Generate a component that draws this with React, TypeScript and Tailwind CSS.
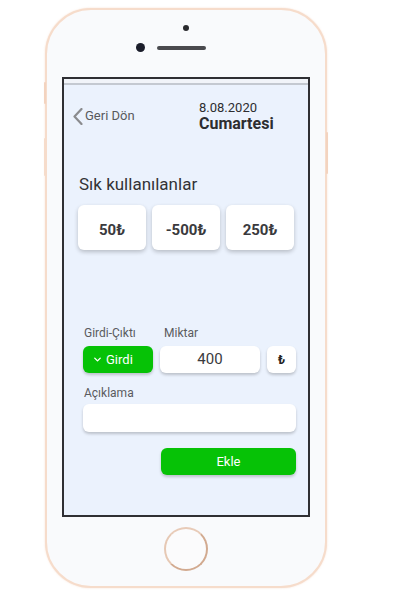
import { ChevronDown } from "lucide-react";

const quick = ["50₺", "-500₺", "250₺"];

const App = () => {
  return (
    <div className="w-[414px] h-[602px] bg-white overflow-hidden font-['Roboto',sans-serif]">
      <div className="relative ml-[45px] mt-[8px] w-[282px] h-[580px] rounded-[46px] border-2 border-[#f6dccb] bg-[#f9fafc] flex flex-col items-center shadow-[0_0_2px_rgba(240,200,175,0.6)]">
        {/* side buttons */}
        <div className="absolute -left-[3px] top-[72px] w-[2px] h-[22px] rounded-full bg-[#f3d3bf]" />
        <div className="absolute -left-[3px] top-[128px] w-[2px] h-[38px] rounded-full bg-[#f6dccb]" />
        <div className="absolute -right-[3px] top-[122px] w-[2px] h-[42px] rounded-full bg-[#f3d3bf]" />

        {/* top: sensor, camera, speaker */}
        <div className="h-[67px] w-full flex flex-col items-center">
          <div className="mt-[15px] w-[6px] h-[6px] rounded-full bg-[#2a2a2e]" />
          <div className="mt-[12px] flex items-center gap-[12px] -ml-[30px]">
            <div className="w-[9px] h-[9px] rounded-full bg-[#1b1d2b]" />
            <div className="w-[49px] h-[4px] rounded-full bg-[#4a4a4e]" />
          </div>
        </div>

        {/* screen */}
        <div className="w-[248px] h-[440px] border-2 border-[#2f2f33] bg-[#ebf2fd] flex flex-col">
          <div className="h-[4px] bg-[#f1f4f9]" />
          <div className="h-[2px] bg-[#c4c9d1]" />

          <div className="mt-[15px] flex items-center pl-[9px]">
            <div className="w-[126px] flex items-center gap-[2px] text-[#58595c] text-[13px]">
              <svg width="10" height="17" viewBox="0 0 10 17" fill="none">
                <polyline points="8.5,1 1.5,8.5 8.5,16" stroke="#8a8b8e" strokeWidth="2.2" strokeLinecap="round" strokeLinejoin="round" />
              </svg>
              <span>Geri Dön</span>
            </div>
            <div className="flex flex-col text-[#2d2d30]">
              <span className="text-[13px] leading-[15px]">8.08.2020</span>
              <span className="text-[16px] leading-[17px] font-bold">Cumartesi</span>
            </div>
          </div>

          <div className="mt-[42px] pl-[15px] text-[17px] leading-[20px] text-[#333336]">Sık kullanılanlar</div>

          <div className="mt-[11px] px-[14px] flex gap-[6px]">
            {quick.map((q) => (
              <div
                key={q}
                className="flex-1 h-[45px] pt-[5px] rounded-[6px] bg-white shadow-[0_2px_4px_rgba(0,0,0,0.22)] flex items-center justify-center text-[15px] font-bold text-[#3a3a3d]"
              >
                {q}
              </div>
            ))}
          </div>

          <div className="mt-[76px] pl-[19px] pr-[12px]">
            <div className="flex text-[12px] leading-[14px] text-[#5a5b5e]">
              <span className="w-[81px] pl-[1px]">Girdi-Çıktı</span>
              <span>Miktar</span>
            </div>
            <div className="mt-[6px] flex gap-[7px] h-[27px]">
              <div className="w-[70px] rounded-[6px] bg-[#06c206] shadow-[0_2px_3px_rgba(0,0,0,0.2)] flex items-center pl-[9px] text-white text-[13px]">
                <ChevronDown className="w-[11px] h-[11px] mr-[3px]" strokeWidth={3} />
                Girdi
              </div>
              <div className="w-[100px] rounded-[6px] bg-white shadow-[0_2px_3px_rgba(0,0,0,0.2)] flex items-center justify-center text-[15px] text-[#3a3a3d]">
                400
              </div>
              <div className="w-[29px] rounded-[6px] bg-white shadow-[0_2px_3px_rgba(0,0,0,0.2)] flex items-center justify-center text-[12px] font-bold text-[#222]">
                ₺
              </div>
            </div>
            <div className="mt-[13px] pl-[1px] text-[12px] leading-[14px] text-[#5a5b5e]">Açıklama</div>
            <div className="mt-[4px] h-[28px] rounded-[6px] bg-white shadow-[0_2px_3px_rgba(0,0,0,0.2)]" />
            <div className="mt-[16px] flex justify-end">
              <div className="w-[135px] h-[27px] rounded-[6px] bg-[#06c206] shadow-[0_2px_3px_rgba(0,0,0,0.2)] flex items-center justify-center text-white text-[13px]">
                Ekle
              </div>
            </div>
          </div>
        </div>

        {/* home button */}
        <div className="mt-[10px] w-[44px] h-[44px] rounded-full border-2 border-[#d2aa90] border-t-[#e8cbb8] border-l-[#e6c8b4] bg-[#fbfbfc]" />
      </div>
    </div>
  );
};

export default App;
